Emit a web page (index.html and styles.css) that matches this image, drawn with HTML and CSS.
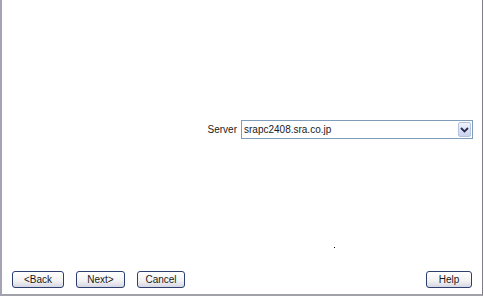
FILE: index.html
```html
<!DOCTYPE html>
<html lang="en">
<head>
    <meta charset="UTF-8">
    <title>Server</title>
    <link rel="stylesheet" href="styles.css">
</head>
<body>
    <div class="frame">
        <div class="server-row">
            <label class="server-label">Server</label>
            <div class="combo">
                <span class="combo-text">srapc2408.sra.co.jp</span>
                <span class="combo-btn">
                    <svg width="9" height="6" viewBox="0 0 9 6"><path d="M1 1 L4.5 4.5 L8 1" fill="none" stroke="#2b2b50" stroke-width="1.8"/></svg>
                </span>
            </div>
        </div>
        <div class="dot"></div>
        <div class="button-bar">
            <button class="btn btn-back">&lt;Back</button>
            <button class="btn btn-next">Next&gt;</button>
            <button class="btn btn-cancel">Cancel</button>
            <button class="btn btn-help">Help</button>
        </div>
    </div>
</body>
</html>
```

FILE: styles.css
```css
body {
    margin: 0;
    background: #ffffff;
    font-family: "Liberation Sans", Arial, sans-serif;
    font-size: 10px;
    color: #1a1a1a;
}
.frame {
    width: 483px;
    height: 296px;
    box-sizing: border-box;
    border-left: 2px solid #a4a4b4;
    border-right: 1px solid #7c7c8c;
    border-bottom: 2px solid #a2a2aa;
    display: flex;
    flex-direction: column;
    position: relative;
}
.server-row {
    margin-top: 120px;
    display: flex;
    justify-content: flex-end;
    align-items: center;
    gap: 4px;
    padding-right: 9px;
}
.combo {
    width: 232px;
    height: 19px;
    box-sizing: border-box;
    border: 1px solid #7f9db9;
    display: flex;
    align-items: center;
    justify-content: space-between;
}
.combo-text {
    padding-left: 2px;
}
.combo-btn {
    width: 13px;
    height: 15px;
    margin-right: 1px;
    box-sizing: border-box;
    border: 1px solid #b6c3de;
    border-radius: 2px;
    background: linear-gradient(#eef2fb, #c9d3ee);
    display: flex;
    align-items: center;
    justify-content: center;
}
.dot {
    position: absolute;
    left: 332px;
    top: 247px;
    width: 1px;
    height: 1px;
    background: #000;
}
.button-bar {
    margin-top: auto;
    display: flex;
    gap: 12px;
    padding: 0 10px 6px 10px;
}
.btn {
    height: 17px;
    box-sizing: border-box;
    padding: 0;
    font-family: "Liberation Sans", Arial, sans-serif;
    font-size: 10px;
    color: #1a1a1a;
    border: 1px solid #2c3f6e;
    border-radius: 3px;
    background: linear-gradient(#ffffff, #f2f2f2 60%, #d6d6e4);
}
.btn-back { width: 52px; }
.btn-next { width: 49px; }
.btn-cancel { width: 48px; }
.btn-help { width: 46px; margin-left: auto; }
```
